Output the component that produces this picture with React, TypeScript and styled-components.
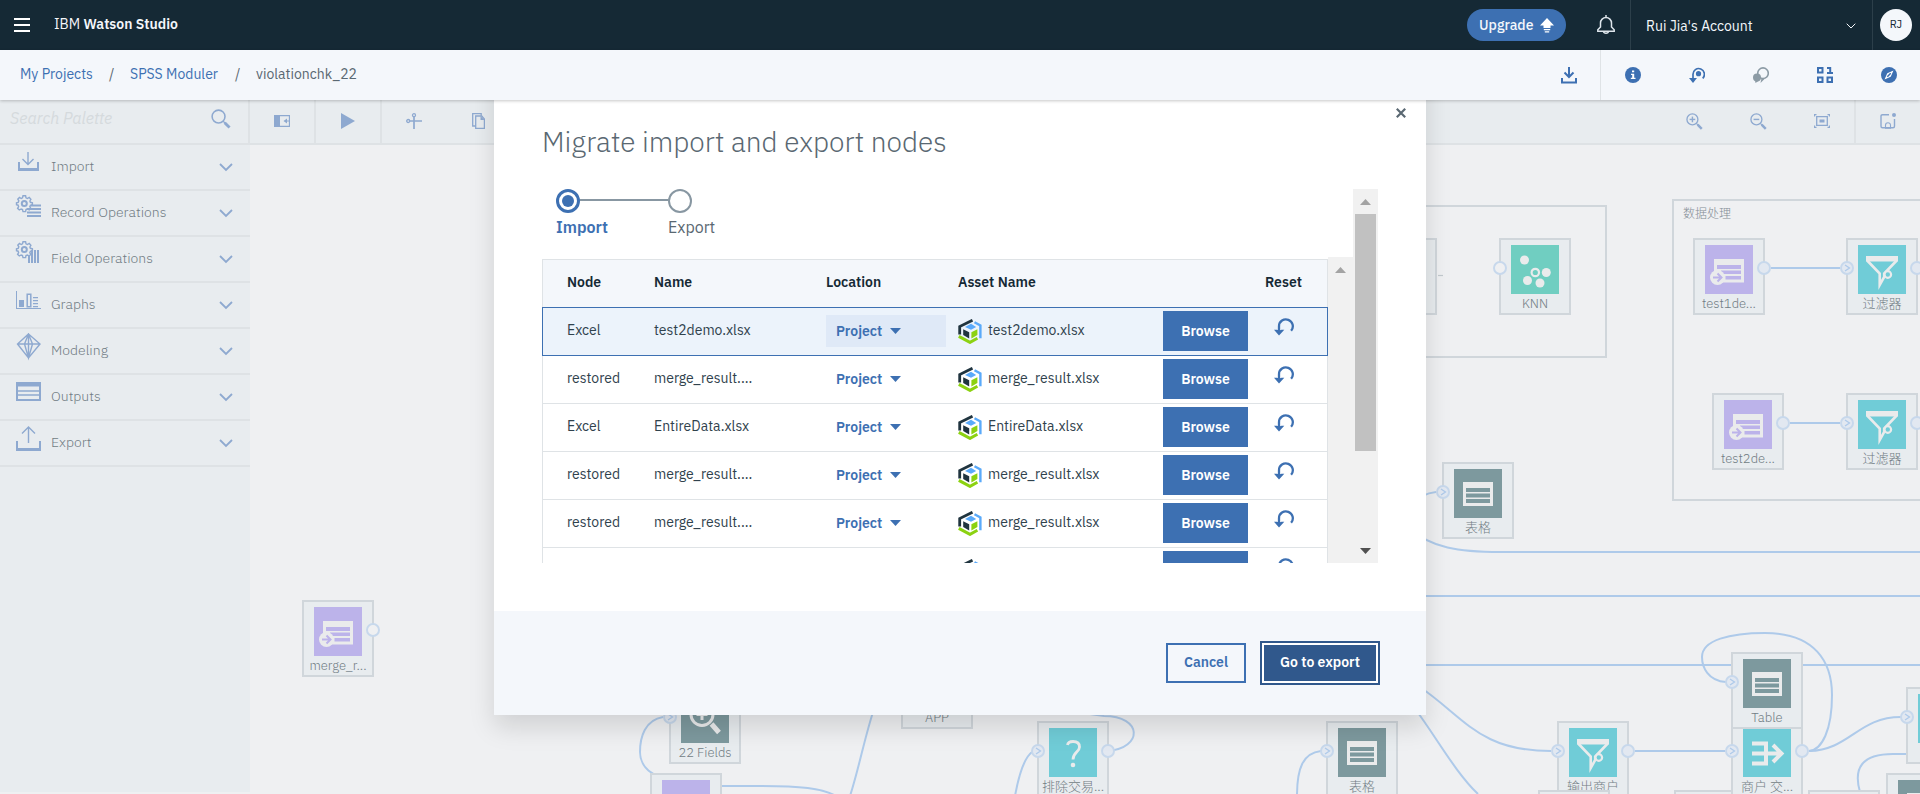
import React from "react";
import styled, { createGlobalStyle, css } from "styled-components";

const c = {
  navy: "#152935",
  blue: "#3d70b2",
  faded: "#8ea9d0",
  bar: "#e8ecef",
  canvas: "#eff0f2",
  line: "#dee2e5",
  nodeLine: "#d0d6db",
  link: "#aecaea",
  portLine: "#c7d8ec",
  port: "#e2e8f1",
  light: "#f4f7fb",
};

const GlobalStyle = createGlobalStyle`
  * { box-sizing: border-box; }
  html, body { margin: 0; padding: 0; overflow: hidden; }
  body {
    font-family: "IBM Plex Sans", Roboto, "Noto Sans CJK SC", sans-serif;
    font-size: 14px;
    color: ${c.navy};
  }
  button { font-family: inherit; cursor: pointer; }
  svg { display: block; flex: none; }
`;

/* ---------- shell ---------- */

const Page = styled.div`
  display: flex;
  flex-direction: column;
  width: 1920px;
  height: 794px;
  overflow: hidden;
  background: ${c.canvas};
`;

const Header = styled.header`
  display: flex;
  align-items: center;
  height: 50px;
  background: ${c.navy};
  color: #f4f7fb;
  position: relative;
  z-index: 3;
`;

const MenuButton = styled.div`
  display: flex;
  flex-direction: column;
  gap: 4px;
  width: 16px;
  margin-left: 14px;
  i {
    height: 2px;
    background: #fff;
  }
`;

const Brand = styled.div`
  margin-left: 24px;
  padding-bottom: 2px;
  flex: 1;
  b {
    font-weight: 600;
  }
`;

const Upgrade = styled.div`
  display: flex;
  align-items: center;
  gap: 8px;
  width: 99px;
  height: 32px;
  padding: 0 0 0 12px;
  border-radius: 16px;
  background: ${c.blue};
  font-weight: 500;
  span {
    width: 53px;
    padding-bottom: 1px;
  }
`;

const Bell = styled.div`
  width: 64px;
  padding-left: 31px;
`;

const Account = styled.div`
  display: flex;
  align-items: center;
  justify-content: space-between;
  width: 243px;
  height: 50px;
  padding: 1px 16px 0 15px;
  border-left: 1px solid #2c3f4a;
  border-right: 1px solid #2c3f4a;
`;

const Avatar = styled.div`
  width: 32px;
  height: 32px;
  margin: 0 8px 0 7px;
  border-radius: 50%;
  background: ${c.light};
  color: #152935;
  font-size: 11px;
  line-height: 31px;
  text-align: center;
`;

const SubBar = styled.div`
  display: flex;
  align-items: center;
  height: 50px;
  padding-left: 20px;
  background: ${c.light};
  box-shadow: 0 1px 3px rgba(0, 0, 0, 0.22);
  position: relative;
  z-index: 3;
`;

const Crumb = styled.span<{ $w: number; $current?: boolean }>`
  width: ${(p) => p.$w}px;
  white-space: nowrap;
  color: ${(p) => (p.$current ? "#5a6872" : c.blue)};
  padding-bottom: 2px;
`;

const CrumbSlash = styled.span`
  width: 37px;
  padding-left: 16px;
  color: #5a6872;
  padding-bottom: 2px;
`;

const Spacer = styled.div`
  flex: 1;
`;

const IconCell = styled.div<{ $w: number; $line?: boolean }>`
  display: flex;
  align-items: center;
  justify-content: center;
  width: ${(p) => p.$w}px;
  height: 100%;
  color: ${c.blue};
  ${(p) => p.$line && css`border-left: 1px solid #dfe3e6;`}
`;

const Workspace = styled.div`
  display: flex;
  height: 694px;
  position: relative;
  overflow: hidden;
`;

/* ---------- palette ---------- */

const Palette = styled.aside`
  width: 250px;
  height: 692px;
  background: ${c.bar};
  color: ${c.faded};
`;

const Search = styled.div`
  display: flex;
  justify-content: space-between;
  height: 45px;
  padding: 8px 17px 0 10px;
  border-bottom: 2px solid ${c.line};
  border-right: 2px solid ${c.line};
  span {
    color: #d5dadd;
    font-size: 16px;
    font-style: italic;
    line-height: 21px;
  }
  svg {
    margin-top: 1px;
  }
`;

const PaletteRow = styled.div`
  display: flex;
  align-items: center;
  height: 46px;
  padding: 0 17px 2px 13px;
  border-bottom: 2px solid ${c.line};
`;

const PaletteIcon = styled.div`
  width: 38px;
  height: 34px;
`;

const PaletteLabel = styled.span`
  flex: 1;
  padding-bottom: 1px;
  font-weight: 300;
  color: #717c84;
`;

const PaletteToggle = styled.div`
  padding-top: 3px;
`;

/* ---------- canvas ---------- */

const Stage = styled.main`
  flex: 1;
  display: flex;
  flex-direction: column;
`;

const Tools = styled.div`
  display: flex;
  height: 45px;
  background: ${c.bar};
  border-bottom: 2px solid ${c.line};
`;

const Tool = styled.div<{ $w: number; $r?: boolean; $l?: boolean }>`
  display: flex;
  align-items: center;
  justify-content: center;
  width: ${(p) => p.$w}px;
  padding-bottom: 1px;
  color: ${c.faded};
  ${(p) => p.$r && css`border-right: 2px solid ${c.line};`}
  ${(p) => p.$l && css`border-left: 2px solid ${c.line};`}
`;

const Canvas = styled.div`
  flex: 1;
  position: relative;
  overflow: hidden;
`;

const Links = styled.svg`
  position: absolute;
  left: 0;
  top: 0;
`;

const Group = styled.div<{ $x: number; $y: number; $w: number; $h: number }>`
  position: absolute;
  left: ${(p) => p.$x - 250}px;
  top: ${(p) => p.$y - 145}px;
  width: ${(p) => p.$w}px;
  height: ${(p) => p.$h}px;
  border: 2px solid ${c.nodeLine};
  padding: 6px 9px;
  font-size: 12px;
  line-height: 14px;
  font-weight: 300;
  color: #848d95;
`;

const NodeBox = styled.div<{ $x: number; $y: number }>`
  position: absolute;
  left: ${(p) => p.$x - 250}px;
  top: ${(p) => p.$y - 145}px;
  width: 72px;
  height: 77px;
  border: 2px solid ${c.nodeLine};
  background: ${c.bar};
  display: flex;
  flex-direction: column;
  align-items: center;
  padding-top: 5px;
`;

const NodeTile = styled.div<{ $bg: string }>`
  display: flex;
  align-items: center;
  justify-content: center;
  width: 48px;
  height: 49px;
  background: ${(p) => p.$bg};
  color: #eaebec;
`;

const NodeLabel = styled.div`
  margin-top: 2px;
  font-size: 13px;
  line-height: 16px;
  font-weight: 300;
  color: #717c84;
  white-space: nowrap;
`;

const Port = styled.div<{ $side: "in" | "out"; $hollow?: boolean }>`
  position: absolute;
  top: 21px;
  ${(p) => (p.$side === "in" ? "left: -8px;" : "right: -8px;")}
  width: 14px;
  height: 14px;
  border-radius: 50%;
  border: 2px solid ${c.portLine};
  background: ${(p) => (p.$hollow ? c.canvas : c.port)};
  color: ${c.link};
`;

/* ---------- dialog ---------- */

const Dialog = styled.section`
  position: absolute;
  left: 494px;
  top: -60px;
  width: 932px;
  height: 675px;
  padding-top: 60px;
  display: flex;
  flex-direction: column;
  background: #fff;
  box-shadow: 0 12px 24px rgba(0, 0, 0, 0.13);
`;

const DialogHead = styled.div`
  display: flex;
  justify-content: space-between;
  height: 89px;
  padding: 8px 20px 0 48px;
`;

const Title = styled.h1`
  margin: 17px 0 0;
  font-size: 28px;
  line-height: 34px;
  font-weight: 300;
  color: #5a6872;
`;

const DialogBody = styled.div`
  display: flex;
  height: 374px;
  margin-left: 48px;
  width: 836px;
  overflow: hidden;
`;

const Scroll = styled.div`
  width: 811px;
  height: 374px;
  overflow: hidden;
`;

const Track = styled.div`
  width: 25px;
  background: #f1f1f1;
  display: flex;
  flex-direction: column;
  align-items: center;
  justify-content: space-between;
  padding: 10px 0 9px;
`;

const Thumb = styled.div`
  width: 21px;
  height: 237px;
  margin: 9px 0 auto;
  background: #c1c1c1;
`;

const Steps = styled.div`
  display: flex;
  height: 68px;
  padding-left: 14px;
`;

const Step = styled.div<{ $active?: boolean; $w: number }>`
  width: ${(p) => p.$w}px;
  font-size: 16px;
  line-height: 20px;
  color: ${(p) => (p.$active ? c.blue : "#5a6872")};
  font-weight: ${(p) => (p.$active ? 600 : 400)};
  span {
    display: block;
    margin-top: 4px;
  }
`;

const StepRail = styled.div`
  display: flex;
  align-items: center;
`;

const StepDot = styled.div<{ $active?: boolean }>`
  width: 24px;
  height: 24px;
  border-radius: 50%;
  border: ${(p) => (p.$active ? "3px" : "2px")} solid ${(p) => (p.$active ? c.blue : "#8897a2")};
  display: flex;
  align-items: center;
  justify-content: center;
  i {
    width: 12px;
    height: 12px;
    border-radius: 50%;
    background: ${c.blue};
  }
`;

const StepLine = styled.div`
  flex: 1;
  height: 2px;
  margin-bottom: 2px;
  background: #8897a2;
`;

const TableArea = styled.div`
  display: flex;
  height: 306px;
`;

const Table = styled.div`
  width: 786px;
  height: 320px;
  margin-top: 2px;
  border: 1px solid #dfe3e6;
`;

const grid = css`
  display: grid;
  grid-template-columns: 87px 172px 132px 205px 102px 62px;
  align-items: center;
  padding-left: 24px;
`;

const HeadRow = styled.div`
  ${grid}
  height: 47px;
  background: ${c.light};
  font-weight: 600;
  padding-bottom: 3px;
`;

const Row = styled.div<{ $active?: boolean }>`
  ${grid}
  height: 48px;
  padding-bottom: 1px;
  border-bottom: 1px solid #dfe3e6;
  ${(p) =>
    p.$active &&
    css`
      height: 49px;
      margin: 0 -1px;
      border: 1px solid ${c.blue};
      background: #ecf3fb;
    `}
`;

const CellText = styled.span`
  color: #30424d;
  padding-bottom: 2px;
`;

const Drop = styled.div<{ $active?: boolean }>`
  display: flex;
  align-items: center;
  gap: 8px;
  width: 120px;
  height: 32px;
  padding-left: 10px;
  font-weight: 600;
  color: ${c.blue};
  background: ${(p) => (p.$active ? "#dfe9f7" : "transparent")};
  span {
    width: 46px;
  }
`;

const Asset = styled.div`
  display: flex;
  align-items: center;
  gap: 6px;
`;

const Browse = styled.button`
  width: 85px;
  height: 40px;
  border: 0;
  padding: 0 0 1px;
  background: ${c.blue};
  color: #fff;
  font-size: 14px;
  font-weight: 600;
`;

const ResetIcon = styled.div`
  padding: 0 0 8px 9px;
`;

const DialogFoot = styled.footer`
  display: flex;
  justify-content: flex-end;
  align-items: center;
  gap: 14px;
  height: 104px;
  margin-top: auto;
  padding-right: 46px;
  background: ${c.light};
`;

const Cancel = styled.button`
  width: 80px;
  height: 40px;
  padding: 0 0 2px;
  border: 2px solid ${c.blue};
  background: transparent;
  color: ${c.blue};
  font-size: 14px;
  font-weight: 600;
`;

const Primary = styled.button`
  width: 120px;
  height: 44px;
  padding: 0 0 2px;
  border: 2px solid #30588c;
  box-shadow: inset 0 0 0 2px #fff;
  background: #30588c;
  color: #fff;
  font-size: 14px;
  font-weight: 600;
`;

/* ---------- icons ---------- */

const Chevron = ({ w = 14, sw = 2 }: { w?: number; sw?: number }) => (
  <svg width={w} height={w * 0.6} viewBox="0 0 14 8.4" fill="none" stroke="currentColor" strokeWidth={sw}>
    <path d="M1 1l6 6 6-6" />
  </svg>
);

const Triangle = ({ up, w = 11, color = "currentColor" }: { up?: boolean; w?: number; color?: string }) => (
  <svg width={w} height="6" viewBox="0 0 11 6" preserveAspectRatio="none" fill={color}>
    <path d={up ? "M0 6L5.5 0 11 6z" : "M0 0h11L5.5 6z"} />
  </svg>
);

const Gear = () => (
  <>
    <path
      d="M7 .8h2.6l.4 2 1.4.7 1.8-1 1.7 1.8-1 1.7.5 1.3 2 .5v2l-2 .5-.6 1.4 1 1.7-1.6 1.6-1.8-1-1.4.6-.4 2H7l-.5-2-1.4-.6-1.8 1-1.7-1.7 1-1.7-.5-1.4-1.6-.4V7.8l1.7-.5.6-1.4-1-1.7L3.5 2.5l1.7 1 1.3-.7z"
      fill="none"
      stroke="currentColor"
      strokeWidth="1.4"
    />
    <circle cx="8.3" cy="8.4" r="2.5" fill="none" stroke="currentColor" strokeWidth="2" />
  </>
);

const paletteIcons: Record<string, React.ReactNode> = {
  Import: (
    <svg width="26" height="26" viewBox="0 0 26 26" fill="none" stroke="currentColor" strokeWidth="1.4">
      <path d="M15 3v12M9.5 10l5.5 5.5 5.5-5.5" />
      <path d="M6 13v8M25 13v8" strokeWidth="2" />
      <path d="M5 20.5h21" strokeWidth="3" />
    </svg>
  ),
  "Record Operations": (
    <svg width="28" height="28" viewBox="-3 0 28 28" fill="currentColor">
      <Gear />
      <path d="M15 9.5h10v2H14zM11 13h14v2H10zM11 16.5h14v2H11zM11 20h14v2H11z" />
    </svg>
  ),
  "Field Operations": (
    <svg width="28" height="28" viewBox="-3 0 28 28" fill="currentColor">
      <Gear />
      <path d="M12 14h2v8h-2zM15 9h2v13h-2zM18 9h2v13h-2zM21 9h2v13h-2z" />
    </svg>
  ),
  Graphs: (
    <svg width="28" height="28" viewBox="-3 0 28 28" fill="currentColor">
      <path d="M0 4h1v17h24v1H0zM3 13h5v7H3z" />
      <path d="M11.2 7.2h3.6v12.6h-3.6z" fill="none" stroke="currentColor" strokeWidth="1.5" />
      <path d="M17 10h5v1.2h-5zM17 13h5v1.2h-5zM17 16h5v1.2h-5zM17 19h5v1.2h-5z" />
    </svg>
  ),
  Modeling: (
    <svg width="28" height="28" viewBox="-3 0 28 28" fill="none" stroke="currentColor" strokeWidth="1.4">
      <path d="M12.5 1L24 11 12.5 25 1.5 11zM1.5 11H24M12.5 1L8.5 11l4 14 4-14zM12.5 1v24" />
    </svg>
  ),
  Outputs: (
    <svg width="28" height="28" viewBox="-3 0 28 28" fill="none" stroke="currentColor">
      <path d="M1 4h23v17H1z" strokeWidth="2" />
      <path d="M1 5.5h23" strokeWidth="4" />
      <path d="M2 12h21M2 16h21" strokeWidth="1.3" />
    </svg>
  ),
  Export: (
    <svg width="28" height="28" viewBox="-3 0 28 28" fill="none" stroke="currentColor" strokeWidth="1.4">
      <path d="M12.5 18V2M6 8.500L12.5 2 19 8.500" />
      <path d="M1 16v9M24 16v9" strokeWidth="2" />
      <path d="M0 24.5h25" strokeWidth="3" />
    </svg>
  ),
};

const AssetIcon = () => (
  <svg width="24" height="25" viewBox="0 0 24 25" fill="none">
    <path d="M1.7 15.5V7.6L14.5 1.2" stroke="#20343f" strokeWidth="2.8" />
    <path d="M16.5 3.2l5.9 3.3v12.8" stroke="#5aaafa" strokeWidth="2.4" />
    <path d="M.8 17.4l11.2 6 7.4-4.1" stroke="#8cd211" strokeWidth="3" />
    <path d="M7 8l6-3.2L18.2 8 13 10.8z" fill="#5aaafa" />
    <path d="M5.2 10.2l6 3v6.2l-6-3.4z" fill="#20343f" />
    <path d="M13.4 13.2l6-3v5.9l-6 3.3z" fill="#8cd211" />
  </svg>
);

const Undo = () => (
  <svg width="21" height="18" viewBox="0 0 21 18" fill="none">
    <path d="M5 13V8.200a6.900 6.900 0 1 1 12.1 4.600" stroke={c.blue} strokeWidth="2.3" />
    <path d="M0 11.800h3l2.200.8 2.300-.8h2.800L5 17.500z" fill={c.blue} />
  </svg>
);

const Magnifier = ({ sign, s = 18 }: { sign?: "+" | "-"; s?: number }) => (
  <svg width={s} height={s} viewBox="0 0 18 18" fill="none" stroke="currentColor">
    <circle cx="6.8" cy="6.8" r="5.800" strokeWidth="1.4" />
    <path d="M11 11l1.5 1.5" strokeWidth="1.2" />
    <path d="M12.3 12.3l4.400 4.400" strokeWidth="2.6" />
    {sign && <path d="M3.8 6.8h6" strokeWidth="1.5" />}
    {sign === "+" && <path d="M6.8 3.8v6" strokeWidth="1.5" />}
  </svg>
);

const tiles: Record<string, { bg: string; icon: React.ReactNode }> = {
  knn: {
    bg: "#70cec1",
    icon: (
      <svg width="48" height="48" viewBox="0 0 48 48" fill="currentColor">
        <circle cx="13.5" cy="14" r="4.5" />
        <circle cx="16.5" cy="34.5" r="4.5" />
        <circle cx="29" cy="37" r="4.5" />
        <circle cx="35.3" cy="26.5" r="4.5" />
        <circle cx="24.3" cy="26.5" r="3.7" fill="none" stroke="currentColor" strokeWidth="2.2" />
      </svg>
    ),
  },
  source: {
    bg: "#bcb3ea",
    icon: (
      <svg width="48" height="48" viewBox="0 0 48 48">
        <path d="M9 13h30v23.5H9z" fill="currentColor" />
        <path d="M12 19h24v4H12zM16 24.5h20v3.5H16zM20.5 30h15.5v3.5H20.500z" fill="#bcb3ea" />
        <circle cx="12.5" cy="31.5" r="7.5" fill="currentColor" />
        <path d="M8 31.5h8M12.5 27.5l4 4-4 4" fill="none" stroke="#bcb3ea" strokeWidth="2" />
      </svg>
    ),
  },
  filter: {
    bg: "#70ccd7",
    icon: (
      <svg width="48" height="48" viewBox="0 0 48 48" fill="none" stroke="currentColor">
        <path d="M9.2 14.5l12.5 13V39l4.5-8V27.5l12.5-13" strokeWidth="2.6" />
        <path d="M8 10h32v5.5H8z" fill="currentColor" stroke="none" />
        <circle cx="29.8" cy="28.5" r="3.3" strokeWidth="2.2" fill="#70ccd7" />
      </svg>
    ),
  },
  table: {
    bg: "#7d999e",
    icon: (
      <svg width="48" height="48" viewBox="0 0 48 48">
        <path d="M9 12h30v24H9z" fill="currentColor" />
        <path d="M12 18h24v4H12zM12 23.5h24v4H12zM12 29h24v4H12z" fill="#7d999e" />
      </svg>
    ),
  },
  merge: {
    bg: "#70ccd7",
    icon: (
      <svg width="48" height="48" viewBox="0 0 48 48" fill="none" stroke="currentColor" strokeWidth="4">
        <path d="M9 14.5h14v20H9M9 24.5h28M30 16l8.5 8.5L30 33" />
      </svg>
    ),
  },
  question: {
    bg: "#70ccd7",
    icon: (
      <svg width="48" height="48" viewBox="0 0 48 48" fill="none" stroke="currentColor" strokeWidth="2.8">
        <path d="M18.5 16c.5-3 3-3.500 5.500-3.500 3.500 0 6.500 1.500 6.500 5.500 0 5-6.500 5.500-6.500 12.500" />
        <circle cx="24" cy="36" r="2.3" fill="currentColor" stroke="none" />
      </svg>
    ),
  },
  audit: {
    bg: "#7d999e",
    icon: (
      <svg width="48" height="48" viewBox="0 0 48 48" fill="none" stroke="currentColor" strokeWidth="3">
        <circle cx="21" cy="19.5" r="11" />
        <path d="M21 14v11M15.5 19.5h11" />
        <path d="M30.5 29l7.5 8.5" strokeWidth="5" />
      </svg>
    ),
  },
  blank: { bg: c.bar, icon: null },
};

/* ---------- data ---------- */

type NodeSpec = {
  x: number;
  y: number;
  tile: string;
  label: string;
  input?: "arrow" | "hollow";
  output?: "full" | "hollow";
};

const nodes: NodeSpec[] = [
  { x: 1365, y: 238, tile: "blank", label: "" },
  { x: 1499, y: 238, tile: "knn", label: "KNN", input: "hollow" },
  { x: 1693, y: 238, tile: "source", label: "test1de...", output: "full" },
  { x: 1846, y: 238, tile: "filter", label: "过滤器", input: "arrow", output: "full" },
  { x: 1712, y: 393, tile: "source", label: "test2de...", output: "full" },
  { x: 1846, y: 393, tile: "filter", label: "过滤器", input: "arrow", output: "full" },
  { x: 1442, y: 462, tile: "table", label: "表格", input: "arrow" },
  { x: 302, y: 600, tile: "source", label: "merge_r...", output: "hollow" },
  { x: 669, y: 687, tile: "audit", label: "22 Fields", input: "arrow" },
  { x: 650, y: 773, tile: "source", label: "" },
  { x: 901, y: 652, tile: "blank", label: "APP" },
  { x: 1037, y: 721, tile: "question", label: "排除交易...", input: "arrow", output: "full" },
  { x: 1326, y: 721, tile: "table", label: "表格", input: "arrow" },
  { x: 1557, y: 721, tile: "filter", label: "输出商户", input: "arrow", output: "full" },
  { x: 1538, y: 790, tile: "blank", label: "" },
  { x: 1674, y: 790, tile: "blank", label: "" },
  { x: 1731, y: 721, tile: "merge", label: "商户 交...", input: "arrow", output: "full" },
  { x: 1731, y: 652, tile: "table", label: "Table", input: "arrow" },
  { x: 1906, y: 687, tile: "filter", label: "", input: "arrow" },
  { x: 1808, y: 790, tile: "blank", label: "" },
  { x: 1886, y: 773, tile: "table", label: "" },
];

const links = [
  "M1771 268H1840",
  "M1790 423H1840",
  "M1410 505C1418 497 1426 493 1436 492",
  "M1410 528C1430 548 1460 552 1500 552H1920",
  "M1420 596H1920",
  "M1420 665H1920",
  "M1420 687C1466 719 1480 751 1551 751",
  "M1416 710C1438 740 1456 773 1478 794",
  "M1635 751H1725",
  "M1726 682C1708 681 1702 667 1702 657C1702 640 1730 633 1765 633C1815 633 1832 662 1832 695C1832 730 1822 750 1809 751",
  "M1809 751C1850 750 1858 717 1901 717",
  "M1910 754H1893C1862 754 1853 768 1860 792",
  "M1108 751C1143 748 1143 716 1104 716L1090 714",
  "M1032 752C1024 758 1019 774 1015 796",
  "M1321 751C1303 753 1297 768 1297 796",
  "M663 717C645 720 640 737 640 752C640 764 648 772 658 776",
  "M722 786H760C800 786 822 788 836 796",
  "M877 700C866 730 860 765 850 796",
];

const rows: [string, string, string][] = [
  ["Excel", "test2demo.xlsx", "test2demo.xlsx"],
  ["restored", "merge_result....", "merge_result.xlsx"],
  ["Excel", "EntireData.xlsx", "EntireData.xlsx"],
  ["restored", "merge_result....", "merge_result.xlsx"],
  ["restored", "merge_result....", "merge_result.xlsx"],
  ["", "", ""],
];

const FlowNode = ({ x, y, tile, label, input, output }: NodeSpec) => (
  <NodeBox $x={x} $y={y}>
    <NodeTile $bg={tiles[tile].bg}>{tiles[tile].icon}</NodeTile>
    <NodeLabel>{label}</NodeLabel>
    {input && (
      <Port $side="in" $hollow={input === "hollow"}>
        {input === "arrow" && (
          <svg width="10" height="10" viewBox="0 0 10 10" fill="none" stroke="currentColor" strokeWidth="1.3">
            <path d="M3 2l4.500 3L3 8" />
          </svg>
        )}
      </Port>
    )}
    {output && <Port $side="out" $hollow={output === "hollow"} />}
  </NodeBox>
);

export default function App() {
  return (
    <Page>
      <GlobalStyle />
      <Header>
        <MenuButton><i /><i /><i /></MenuButton>
        <Brand>IBM <b>Watson Studio</b></Brand>
        <Upgrade>
          <span>Upgrade</span>
          <svg width="14" height="15" viewBox="0 0 14 15" fill="#fff">
            <path d="M7 0l7 7.500h-3.500V10h-7V7.500H0zM3.800 11h6.400v1.200H3.800zM4.800 13.300h4.400v1.200H4.800z" />
          </svg>
        </Upgrade>
        <Bell>
          <svg width="18" height="20" viewBox="0 0 18 20" fill="none" stroke="#dfe6ec" strokeWidth="1.5">
            <path d="M9 0v2M.8 16.2h16.4v-1.4L14.5 12V8a5.500 5.500 0 0 0-11 0v4L.8 14.800zM6.500 16.500c.3 2.400 4.700 2.400 5 0" />
          </svg>
        </Bell>
        <Account>
          Rui Jia's Account
          <Chevron w={10} sw={1.4} />
        </Account>
        <Avatar>RJ</Avatar>
      </Header>

      <SubBar>
        <Crumb $w={73}>My Projects</Crumb>
        <CrumbSlash>/</CrumbSlash>
        <Crumb $w={89}>SPSS Moduler</Crumb>
        <CrumbSlash>/</CrumbSlash>
        <Crumb $w={120} $current>violationchk_22</Crumb>
        <Spacer />
        <IconCell $w={63}>
          <svg width="16" height="17" viewBox="0 0 16 17" fill="none" stroke="currentColor" strokeWidth="2">
            <path d="M8 0v10M3.500 5.500L8 10l4.500-4.500M1 11v4.500h14V11" />
          </svg>
        </IconCell>
        <IconCell $w={65} $line>
          <svg width="16" height="16" viewBox="0 0 16 16">
            <circle cx="8" cy="8" r="8" fill="currentColor" />
            <path d="M7 3.500h2.200v1.800H7zM6 6.700h3.200v4h1.300V12H5.800v-1.300h1.400V8H6z" fill="#fff" />
          </svg>
        </IconCell>
        <IconCell $w={64}>
          <svg width="16" height="16" viewBox="0 0 16 16" fill="none" stroke="currentColor" strokeWidth="1.7">
            <path d="M4 13V7.500a5.700 5.700 0 1 1 9.700 3.800" />
            <path d="M0 11h8l-4 5z" fill="currentColor" stroke="none" />
            <circle cx="9.5" cy="6.700" r="2.600" fill="currentColor" stroke="none" />
          </svg>
        </IconCell>
        <IconCell $w={64}>
          <svg width="16" height="16" viewBox="0 0 16 16" fill="none" stroke="#8c9ba5" strokeWidth="1.6">
            <circle cx="10" cy="6.200" r="5.300" />
            <path d="M8.500 11l-1 5 4-4z" fill="#8c9ba5" stroke="none" />
            <circle cx="4" cy="10.500" r="4" fill="#8c9ba5" stroke="none" />
            <path d="M2 13l.5 3 3-2z" fill="#8c9ba5" stroke="none" />
          </svg>
        </IconCell>
        <IconCell $w={64}>
          <svg width="16" height="16" viewBox="0 0 16 16" fill="none" stroke="currentColor" strokeWidth="2">
            <path d="M1 1h4.500v4.500H1zM1 10.500h4.500V15H1zM10.500 10.500H15V15h-4.500zM10 1h3.200v5M10 6h6" />
          </svg>
        </IconCell>
        <IconCell $w={63}>
          <svg width="16" height="16" viewBox="0 0 16 16">
            <circle cx="8" cy="8" r="8" fill="currentColor" />
            <path d="M12.500 3.500L9.700 9.700 3.500 12.500l2.800-6.200z" fill="#fff" />
            <path d="M6.300 9.700l3.400-3.400" stroke={c.blue} strokeWidth="1.5" />
          </svg>
        </IconCell>
      </SubBar>

      <Workspace>
        <Palette>
          <Search>
            <span>Search Palette</span>
            <Magnifier s={20} />
          </Search>
          {Object.keys(paletteIcons).map((name) => (
            <PaletteRow key={name}>
              <PaletteIcon>{paletteIcons[name]}</PaletteIcon>
              <PaletteLabel>{name}</PaletteLabel>
              <PaletteToggle><Chevron sw={1.8} /></PaletteToggle>
            </PaletteRow>
          ))}
        </Palette>

        <Stage>
          <Tools>
            <Tool $w={66} $r>
              <svg width="16" height="12" viewBox="0 0 16 12" fill="none" stroke="currentColor">
                <path d="M0 0h6v12H0z" fill="currentColor" stroke="none" />
                <path d="M.5.7h15v10.600H.5z" strokeWidth="1.3" />
                <path d="M16 6h-4" />
                <path d="M13 3.500v5L9.500 6z" fill="currentColor" stroke="none" />
              </svg>
            </Tool>
            <Tool $w={66} $r>
              <svg width="14" height="16" viewBox="0 0 14 16" fill="currentColor"><path d="M0 0l14 8-14 8z" /></svg>
            </Tool>
            <Tool $w={64}>
              <svg width="16" height="16" viewBox="0 0 16 16" fill="none" stroke="currentColor">
                <circle cx="8" cy="2.200" r="1.500" strokeWidth="1.3" />
                <circle cx="2.200" cy="8" r="1.500" strokeWidth="1.3" />
                <path d="M8 4v12M4 8h12" strokeWidth="1.7" />
              </svg>
            </Tool>
            <Tool $w={64}>
              <svg width="13" height="16" viewBox="0 0 13 16" fill="none" stroke="currentColor" strokeWidth="1.3">
                <path d="M3.500 13H.7V.7h8.500v2" />
                <path d="M3.700 3h6l2.700 3v9.300H3.700z" />
                <path d="M8.500 3v4h4z" fill="currentColor" stroke="none" />
              </svg>
            </Tool>
            <Spacer />
            <Tool $w={64}><Magnifier sign="+" s={17} /></Tool>
            <Tool $w={64}><Magnifier sign="-" s={17} /></Tool>
            <Tool $w={64}>
              <svg width="16" height="14" viewBox="0 0 16 14" fill="none" stroke="currentColor" strokeWidth="1.3">
                <path d="M2.700 2.700h10.600v8.600H2.700zM.5 2.500v-2h2M13.500.5h2v2M15.500 11.500v2h-2M2.500 13.500h-2v-2" />
                <path d="M5.500 5.500h5v3h-5z" fill="currentColor" stroke="none" />
              </svg>
            </Tool>
            <Tool $w={66} $l>
              <svg width="16" height="16" viewBox="0 0 16 16" fill="none" stroke="currentColor" strokeWidth="1.4">
                <path d="M9 1.700H2.500q-1.500 0-1.500 1.500v10q0 1.500 1.500 1.500H13q1.500 0 1.500-1.500V6" />
                <circle cx="14" cy="2" r="2" fill="currentColor" stroke="none" />
                <path d="M5.500 15.200v-3a2.500 2.500 0 0 1 5 0v3z" strokeWidth="1.1" />
              </svg>
            </Tool>
          </Tools>
          <Canvas>
            <Group $x={1200} $y={205} $w={407} $h={153} />
            <Group $x={1672} $y={199} $w={300} $h={302}>数据处理</Group>
            <Links width="1670" height="649" viewBox="250 145 1670 649" fill="none" stroke={c.link} strokeWidth="2">
              {links.map((d) => <path key={d} d={d} />)}
              <path d="M1438 275.500h5" stroke="#c3c9ce" strokeWidth="1.2" />
            </Links>
            {nodes.map((n) => <FlowNode key={`${n.x}-${n.y}`} {...n} />)}
          </Canvas>
        </Stage>

        <Dialog>
          <DialogHead>
            <Title>Migrate import and export nodes</Title>
            <svg width="10" height="10" viewBox="0 0 10 10" stroke="#5a6872" strokeWidth="2.2">
              <path d="M.8.8l8.400 8.400M9.200.8L.8 9.200" />
            </svg>
          </DialogHead>
          <DialogBody>
            <Scroll>
              <Steps>
                <Step $w={112} $active>
                  <StepRail>
                    <StepDot $active><i /></StepDot>
                    <StepLine />
                  </StepRail>
                  <span>Import</span>
                </Step>
                <Step $w={80}>
                  <StepRail><StepDot /></StepRail>
                  <span>Export</span>
                </Step>
              </Steps>
              <TableArea>
                <Table>
                  <HeadRow>
                    <span>Node</span>
                    <span>Name</span>
                    <span>Location</span>
                    <span>Asset Name</span>
                    <span />
                    <span>Reset</span>
                  </HeadRow>
                  {rows.map(([node, name, asset], i) => (
                    <Row key={i} $active={i === 0}>
                      <CellText>{node}</CellText>
                      <CellText>{name}</CellText>
                      <Drop $active={i === 0}>
                        {node && <span>Project</span>}
                        {node && <Triangle />}
                      </Drop>
                      <Asset>
                        <AssetIcon />
                        <CellText>{asset}</CellText>
                      </Asset>
                      <Browse>{node && "Browse"}</Browse>
                      <ResetIcon><Undo /></ResetIcon>
                    </Row>
                  ))}
                </Table>
                <Track><Triangle up color="#a3a3a3" /></Track>
              </TableArea>
            </Scroll>
            <Track>
              <Triangle up color="#a3a3a3" />
              <Thumb />
              <Triangle color="#505050" />
            </Track>
          </DialogBody>
          <DialogFoot>
            <Cancel>Cancel</Cancel>
            <Primary>Go to export</Primary>
          </DialogFoot>
        </Dialog>
      </Workspace>
    </Page>
  );
}
